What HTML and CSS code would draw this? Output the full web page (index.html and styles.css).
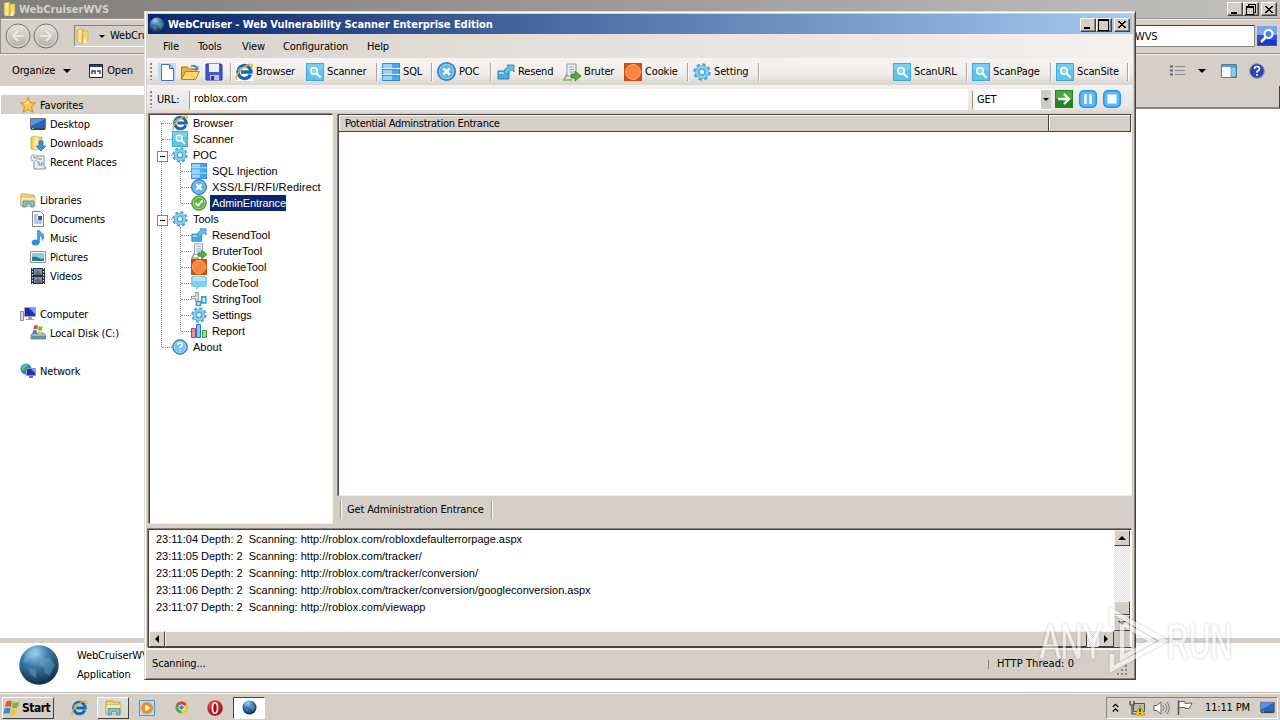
FILE: index.html
```html
<!DOCTYPE html>
<html lang="en">
<head>
  <meta charset="UTF-8" />
  <title>WebCruiser - Web Vulnerability Scanner Enterprise Edition</title>
  <link rel="stylesheet" href="styles.css">
</head>
<body>

<!-- shared icons -->
<svg class="defs" width="0" height="0">
  <defs>
    <linearGradient id="gFolder" x1="0" y1="0" x2="1" y2="0"><stop offset="0" stop-color="#e8c552"/><stop offset=".5" stop-color="#fff0a8"/><stop offset="1" stop-color="#e0b840"/></linearGradient>
    <linearGradient id="gOrb" x1="0" y1="0" x2="0" y2="1"><stop offset="0" stop-color="#e6e4e1"/><stop offset="1" stop-color="#b3afaa"/></linearGradient>
    <radialGradient id="gGlobe" cx=".4" cy=".2" r=".85"><stop offset="0" stop-color="#9fd2ee"/><stop offset=".4" stop-color="#3c7ba8"/><stop offset="1" stop-color="#082742"/></radialGradient>
    <radialGradient id="gRed" cx=".4" cy=".3" r=".7"><stop offset="0" stop-color="#f06060"/><stop offset="1" stop-color="#a80010"/></radialGradient>
  </defs>
  <symbol id="i-folder" viewBox="0 0 16 16"><path d="M2 2l5-1 1 1v13H3l-1-2z" fill="url(#gFolder)" stroke="#c9a23a" stroke-width=".6"/><path d="M8 3h5v10l-5 2z" fill="#f3d76d" stroke="#c9a23a" stroke-width=".6"/><path d="M10 9l2 6H8z" fill="#fff3b8"/></symbol>
  <symbol id="i-globe" viewBox="0 0 16 16"><circle cx="8" cy="8" r="7.500" fill="url(#gGlobe)"/><path d="M3 4q3-3 5-2l-1 2-2 1-1 2-2 0zM9 6l3-1 2 3-2 4-2-1 0-2-2-1zM4 9l3 1 0 3-2-1z" fill="#8fc3e0" opacity=".3"/></symbol>
  <symbol id="i-new" viewBox="0 0 18 18"><path d="M0 0h18v18H0z" fill="#c9d9f4"/><path d="M3.500 1.500h8l4 4v12h-12z" fill="#fbfdff" stroke="#4c6cb0"/><path d="M11.500 1.500v4h4" fill="#9bb8e8" stroke="#4c6cb0"/></symbol>
  <symbol id="i-open" viewBox="0 0 20 18"><path d="M1 16V4h6l2 2h7v3" fill="#e8b23c" stroke="#a87318"/><path d="M1 16.500l4-8h14l-4 8z" fill="#ffd66c" stroke="#b4801c"/><path d="M10 3q4-3 7 1l1-2v5h-5l2-2q-2-2-5-1z" fill="#4b86cc"/></symbol>
  <symbol id="i-save" viewBox="0 0 18 18"><path d="M1 1h15l1 1v15H1z" fill="#4859c8" stroke="#28348c"/><path d="M4 1h10v8H4z" fill="#eef1fb"/><path d="M5 12h9v5H5z" fill="#b8c0e8"/><path d="M6 13h3v4H6z" fill="#2c3890"/></symbol>
  <symbol id="i-ie" viewBox="0 0 18 18"><path d="M15.500 11.500A6.500 6.500 0 1 1 16 9H6" fill="none" stroke="#1668b8" stroke-width="3.400"/><path d="M3 8a6 5 0 0 1 9-3" fill="none" stroke="#6cbcf0" stroke-width="1.400"/><path d="M2 17Q-1 14 6 7T17 1.500q1 1-1 4" fill="none" stroke="#e9b61c" stroke-width="1.600"/></symbol>
  <symbol id="i-scan" viewBox="0 0 18 18"><path d="M0 0h18v18H0z" fill="#3fa9dc"/><path d="M1 1h16v16H1z" fill="#62c2ea"/><path d="M1 1h16v6H1z" fill="#79cdf0"/><circle cx="8" cy="8" r="3.300" fill="#8ad6f5" stroke="#fff" stroke-width="1.500"/><path d="M10.500 10.500l4 4" stroke="#fff" stroke-width="2"/></symbol>
  <symbol id="i-sql" viewBox="0 0 18 18"><path d="M0 0h18v18H0z" fill="#2c8cea"/><path d="M1 1h16v4H1zM1 7h16v4H1zM1 13h16v4H1z" fill="#4aa6f6"/><path d="M1 1h9v4H1zM1 7h9v4H1zM1 13h9v4H1z" fill="#98d4ff"/><path d="M0 5.500h18M0 11.500h18" stroke="#e8f6ff"/></symbol>
  <symbol id="i-poc" viewBox="0 0 18 18"><circle cx="9" cy="9" r="8.500" fill="#3d93d2" stroke="#3478ac"/><circle cx="9" cy="9" r="6.800" fill="#64b5ea" stroke="#8ed0f4"/><path d="M6 6l6 6M12 6l-6 6" stroke="#fff" stroke-width="2.500"/></symbol>
  <symbol id="i-resend" viewBox="0 0 18 18"><path d="M1 8h11v8H1z" fill="#4badde" stroke="#2a83ba"/><path d="M2 9h9v2H2z" fill="#a2dcf5"/><path d="M7 10q0-5 4-6l-1-2h7v7l-2-2q-3 0-4 4z" fill="#65bfea" stroke="#2a83ba" stroke-width=".8"/></symbol>
  <symbol id="i-bruter" viewBox="0 0 18 18"><path d="M4 1h9v12H4z" fill="#eef3f8" stroke="#9098a8"/><path d="M6 4h5M6 6.500h5M6 9h5" stroke="#8fa6cc"/><path d="M4 11l-3 6h8" fill="none" stroke="#7cae66" stroke-width="1.600"/><path d="M8 11h4V8l6 5-6 5v-3H8z" fill="#58ac3c" stroke="#2f7c20" stroke-width=".8"/></symbol>
  <symbol id="i-cookie" viewBox="0 0 18 18"><path d="M0 0h18v18H0z" fill="#c94f15"/><circle cx="9" cy="9" r="7.500" fill="#f9853f" stroke="#ffab76"/></symbol>
  <symbol id="i-gear" viewBox="0 0 18 18"><circle cx="9" cy="9" r="7.600" fill="none" stroke="#4fa8d8" stroke-width="2.200" stroke-dasharray="3.600 2.369"/><circle cx="9" cy="9" r="6.800" fill="#4aa8da"/><circle cx="9" cy="9" r="5" fill="none" stroke="#86d0f2" stroke-width="2.400"/><circle cx="9" cy="9" r="2.700" fill="#fff" stroke="#3b97cc" stroke-width=".8"/></symbol>
  <symbol id="i-check" viewBox="0 0 18 18"><circle cx="9" cy="9" r="8.200" fill="#66b04a" stroke="#3f8430"/><circle cx="9" cy="9" r="6.500" fill="none" stroke="#a8d890"/><path d="M5 9l3 3 5-6" fill="none" stroke="#fff" stroke-width="2"/></symbol>
  <symbol id="i-code" viewBox="0 0 16 16"><path d="M2 1h12q2 0 2 2v7q0 2-2 2H8l-3 3v-3H2q-2 0-2-2V3q0-2 2-2z" fill="#7cd0ee"/><path d="M2 2h12v4H2z" fill="#b8e8f8"/></symbol>
  <symbol id="i-string" viewBox="0 0 16 16"><path d="M6 1v10M0 6.500h6" stroke="#8a949c" stroke-width="3.600"/><path d="M6 2v8M1 6.500h5" stroke="#e6eaee" stroke-width="1.600"/><path d="M5.500 10.500h4v4h-4zM10.800 5.800h4v6h-4z" fill="#d6f0fc" stroke="#3e9fd0" stroke-width="1.700"/></symbol>
  <symbol id="i-report" viewBox="0 0 16 16"><path d="M.5 5.500h4v9h-4z" fill="#f090a8" stroke="#c83858"/><path d="M5.500 1.500h4v13h-4z" fill="#80c8f0" stroke="#2878b0"/><path d="M11.500 7.500h4v7h-4z" fill="#98dc98" stroke="#38983c"/></symbol>
  <symbol id="i-about" viewBox="0 0 18 18"><circle cx="9" cy="9" r="8.300" fill="#439cd6" stroke="#3380b4"/><circle cx="9" cy="9" r="6.500" fill="#77c4ee" stroke="#b0e0f8"/><path d="M6.500 7q0-2.500 2.500-2.500t2.500 2Q11.500 8 9 9.500v1M9 12v1.600" fill="none" stroke="#fff" stroke-width="1.600"/></symbol>
  <symbol id="i-star" viewBox="0 0 16 16"><path d="M8 .5l2.200 5 5.300.6-4 3.600 1.200 5.500L8 12.400l-4.700 2.800 1.200-5.500-4-3.600 5.300-.6z" fill="#fcc84a" stroke="#dc8820"/><path d="M8 3l1 4-5 0z" fill="#fff0a8"/></symbol>
  <symbol id="i-desktop" viewBox="0 0 16 16"><path d="M.5 2.500h15v10H.5z" fill="#2f62bc" stroke="#6a7484"/><path d="M1 3h14L1 10z" fill="#5b94de"/><path d="M1 12h14v2H1z" fill="#39424e"/><path d="M2 12.500h2" stroke="#6d6"/></symbol>
  <symbol id="i-down" viewBox="0 0 16 16"><path d="M1 2l5-1 1 1h5v12l-6 1-5-1z" fill="url(#gFolder)" stroke="#c9a23a" stroke-width=".7"/><path d="M9 6h4v5h3l-5 5-5-5h3z" fill="#3b93dd" stroke="#1d68a8" stroke-width=".7"/></symbol>
  <symbol id="i-recent" viewBox="0 0 16 16"><path d="M5 2h9v11h1.500v2H4V8" fill="#e8edf2" stroke="#8792a0"/><circle cx="4" cy="4" r="3.200" fill="#fff" stroke="#97a0ac"/><path d="M4 2v2h2M8 5h4M7 8h2v3h3V8" fill="none" stroke="#6f8298"/></symbol>
  <symbol id="i-lib" viewBox="0 0 16 16"><path d="M1 2h6l1 1h6v11H1z" fill="#f4dc84" stroke="#cda444"/><path d="M1 5h14v9H1z" fill="#fbea9e" stroke="#cda444" stroke-width=".7"/><path d="M3 15V9h11v6h-3v-3H6v3z" fill="#7cc0e6" stroke="#438cb8" stroke-width=".8"/></symbol>
  <symbol id="i-doc" viewBox="0 0 16 16"><path d="M2.500.5h8l3 3v12h-11z" fill="#fff" stroke="#7a8796"/><path d="M4 4h4M4 6h3M4 12h8M4 10h8M4 8h3" stroke="#6f8fc0"/><path d="M8 5h4v4H8z" fill="#385a88"/></symbol>
  <symbol id="i-music" viewBox="0 0 16 16"><ellipse cx="5.500" cy="12.500" rx="3.800" ry="3" fill="#2e8fdc"/><path d="M7.500 12V.5h2q1 3 4 4 1 3-1 6 0-4-3-5v7z" fill="#49a6e8" stroke="#2074b8" stroke-width=".6"/></symbol>
  <symbol id="i-pic" viewBox="0 0 16 16"><path d="M.5 2.500h15v11H.5z" fill="#fff" stroke="#8a929c"/><path d="M2 4h12v8H2z" fill="#8bc8ee"/><path d="M2 8q4-1 7 1t5 0v3H2z" fill="#2f7c74"/></symbol>
  <symbol id="i-video" viewBox="0 0 16 16"><path d="M1 0h14v16H1z" fill="#27323c"/><path d="M4 1h8v6H4zM4 9h8v6H4z" fill="#5a9cd0"/><path d="M5 5l3-3 2 4 1-1v2H5zM5 13l3-3 3 3v2H5z" fill="#8c5a50"/><path d="M2.500 0v16M13.500 0v16" stroke="#dfe6ec" stroke-dasharray="1.500 1.500"/></symbol>
  <symbol id="i-pc" viewBox="0 0 16 16"><path d="M.5 5.500h3v9h-3z" fill="#d8dade" stroke="#8a8e94"/><path d="M4.500 1.500h11v9h-11z" fill="#1c30b4" stroke="#a4a8b4"/><path d="M9 2h6v6z" fill="#7896f0"/><path d="M8 11h4v2h2v1H6v-1h2z" fill="#a0a4ac"/></symbol>
  <symbol id="i-disk" viewBox="0 0 16 16"><path d="M1 10l2-2h10l2.500 2v4H1z" fill="#a8b4bc" stroke="#66737c" stroke-width=".8"/><path d="M1 11h14v3H1z" fill="#658fa4"/><path d="M4 .500q2-1 4 0l-.7 4q-2-1-4 0z" fill="#e8552c"/><path d="M8.700 1q2 1 4 0l-.7 4q-2 1-4 0z" fill="#77b738"/><path d="M3 5.500q2-1 4 0l-.6 3.500h-4z" fill="#3b83d8"/><path d="M8 6q2 1 4 0l-.7 3h-4z" fill="#f5c02c"/></symbol>
  <symbol id="i-net" viewBox="0 0 16 16"><circle cx="6" cy="6" r="5.500" fill="#2e8bc0"/><path d="M2 3q4-3 6-1l-3 3-3 3zM7 6l3 0-2 4z" fill="#5fc47c"/><path d="M6.500 5.500h9v7h-9z" fill="#1c34bc" stroke="#9098b0"/><path d="M11 6h4v4z" fill="#7b98f0"/><path d="M9 13h4v2H9z" fill="#6c7480"/></symbol>
  <symbol id="i-win" viewBox="0 0 18 18"><path d="M3 3q3-2 6-.5L8 8Q5 6.500 2 8z" fill="#e8592c"/><path d="M10 3q3 1.500 6-.5L15 8q-3 2-6 .5z" fill="#7ab83c"/><path d="M1.500 9.500q3-1.500 6 0L6.500 15q-3-1.500-6 0z" fill="#3b86dc"/><path d="M8.500 10q3 1.500 6-.5L13.500 15q-3 2-6 .5z" fill="#f7c42e"/></symbol>
</svg>

<div class="desktop">

  <!-- Explorer window behind -->
  <div class="explorer">
    <div class="ex-title">
      <svg width="16" height="16"><use href="#i-folder"/></svg>
      <span>WebCruiserWVS</span>
      <div class="win-btns">
        <i class="wbtn min"></i><i class="wbtn restore"></i><i class="wbtn close"></i>
      </div>
    </div>
    <div class="ex-address">
      <svg class="nav-btns" width="56" height="28" viewBox="0 0 56 28">
        <g fill="url(#gOrb)" stroke="#77736e"><circle cx="13" cy="14" r="12"/><circle cx="41" cy="14" r="12"/></g>
        <g fill="none" stroke="#dedbd7"><circle cx="13" cy="14" r="10.500"/><circle cx="41" cy="14" r="10.500"/></g>
        <path d="M19 14H8m5-5l-5 5 5 5M35 14h11m-5-5l5 5-5 5" fill="none" stroke="#efedeb" stroke-width="1.600"/>
      </svg>
      <div class="path"><svg width="16" height="18"><use href="#i-folder"/></svg><b class="arrow-down"></b><span>WebCruiserWVS</span></div>
      <div class="search">WVS</div>
      <svg class="search-btn" width="20" height="20" viewBox="0 0 20 20"><path d="M0 0h20v20H0z" fill="#2d58cc"/><path d="M0 0h20v9H0z" fill="#77a7ec"/><path d="M1 14h18v5H1z" fill="#163ac0"/><circle cx="11.500" cy="8" r="4" fill="#4c83e4" stroke="#fff" stroke-width="2"/><path d="M8.500 11.500L4 16" stroke="#fff" stroke-width="2.500"/></svg>
    </div>
    <div class="ex-tools">
      <span>Organize</span><b class="arrow-down big"></b>
      <svg width="14" height="14" viewBox="0 0 14 14"><path d="M.5.5h13v13H.5z" fill="#fff" stroke="#222"/><path d="M1 1h12v2H1z" fill="#2b3a9c"/><path d="M3 10V7h3v3m2-3h3v3" fill="none" stroke="#345" stroke-width="1.500"/></svg>
      <span class="open">Open</span>
      <div class="ex-views">
        <svg width="15" height="12" viewBox="0 0 15 12"><path d="M0 1.500h3M0 5.500h3M0 9.500h3" stroke="#667" stroke-width="2.200"/><path d="M5 1.500h10M5 5.500h10M5 9.500h10" stroke="#889"/></svg>
        <b class="arrow-down big"></b>
        <svg width="16" height="14" viewBox="0 0 16 14"><path d="M.5.5h15v13H.5z" fill="#fff" stroke="#4480a4"/><path d="M1 1h14v2H1z" fill="#5ca0c8"/><path d="M10 3h5v10h-5z" fill="#8ccae8" stroke="#4480a4" stroke-width=".6"/></svg>
        <svg width="16" height="16" viewBox="0 0 16 16"><circle cx="8" cy="8" r="7.300" fill="#2846b8" stroke="#8c94b0"/><path d="M5.500 6q0-2.500 2.500-2.500T10.500 6Q10.500 7.200 8 8.500v1.300M8 11v1.700" fill="none" stroke="#fff" stroke-width="1.700"/></svg>
      </div>
    </div>
    <div class="ex-body">
      <ul class="places">
        <li class="head sel"><svg><use href="#i-star"/></svg><span>Favorites</span></li>
        <li><svg><use href="#i-desktop"/></svg><span>Desktop</span></li>
        <li><svg><use href="#i-down"/></svg><span>Downloads</span></li>
        <li><svg><use href="#i-recent"/></svg><span>Recent Places</span></li>
        <li class="head gap"><svg><use href="#i-lib"/></svg><span>Libraries</span></li>
        <li><svg><use href="#i-doc"/></svg><span>Documents</span></li>
        <li><svg><use href="#i-music"/></svg><span>Music</span></li>
        <li><svg><use href="#i-pic"/></svg><span>Pictures</span></li>
        <li><svg><use href="#i-video"/></svg><span>Videos</span></li>
        <li class="head gap"><svg><use href="#i-pc"/></svg><span>Computer</span></li>
        <li><svg><use href="#i-disk"/></svg><span>Local Disk (C:)</span></li>
        <li class="head gap"><svg><use href="#i-net"/></svg><span>Network</span></li>
      </ul>
      <div class="files"><div class="files-head"></div></div>
    </div>
    <div class="ex-details">
      <svg width="42" height="42"><use href="#i-globe"/></svg>
      <div><p>WebCruiserWVS</p><p>Application</p></div>
    </div>
  </div>

  <!-- WebCruiser window -->
  <div class="app">
    <div class="app-title">
      <svg width="16" height="16"><use href="#i-globe"/></svg>
      <span>WebCruiser - Web Vulnerability Scanner Enterprise Edition</span>
      <div class="win-btns">
        <i class="wbtn min"></i><i class="wbtn max"></i><i class="wbtn close"></i>
      </div>
    </div>
    <div class="menu"><span>File</span><span>Tools</span><span>View</span><span>Configuration</span><span>Help</span></div>

    <div class="toolbar">
      <i class="grip"></i>
      <svg width="18" height="18"><use href="#i-new"/></svg>
      <svg width="21" height="18"><use href="#i-open"/></svg>
      <svg width="18" height="18"><use href="#i-save"/></svg>
      <i class="sep"></i>
      <a class="tool"><svg class="lit"><use href="#i-ie"/></svg>Browser</a>
      <a class="tool"><svg><use href="#i-scan"/></svg>Scanner</a>
      <i class="sep"></i>
      <a class="tool"><svg><use href="#i-sql"/></svg>SQL</a>
      <i class="sep"></i>
      <a class="tool"><svg class="wide"><use href="#i-poc"/></svg>POC</a>
      <i class="sep"></i>
      <a class="tool"><svg><use href="#i-resend"/></svg>Resend</a>
      <a class="tool"><svg><use href="#i-bruter"/></svg>Bruter</a>
      <a class="tool"><svg><use href="#i-cookie"/></svg>Cookie</a>
      <i class="sep"></i>
      <a class="tool"><svg><use href="#i-gear"/></svg>Setting</a>
      <i class="sep"></i>
      <a class="tool"><svg><use href="#i-scan"/></svg>ScanURL</a>
      <i class="sep"></i>
      <a class="tool"><svg><use href="#i-scan"/></svg>ScanPage</a>
      <i class="sep"></i>
      <a class="tool"><svg><use href="#i-scan"/></svg>ScanSite</a>
      <i class="sep"></i>
    </div>

    <div class="urlbar">
      <i class="grip"></i>
      <span class="label">URL:</span>
      <i class="sep"></i>
      <div class="url">roblox.com</div>
      <i class="sep"></i>
      <div class="method"><span>GET</span><i class="drop"><b class="arrow-down"></b></i></div>
      <svg width="18" height="18" viewBox="0 0 18 18"><path d="M0 0h18v18H0z" fill="#248424"/><path d="M1 1h16v8H1z" fill="#48a83c"/><path d="M3 9h10M9 4l5 5-5 5" fill="none" stroke="#fff" stroke-width="2.400"/></svg>
      <svg width="18" height="18" viewBox="0 0 18 18"><rect width="18" height="18" rx="5" fill="#2b94ee"/><rect x="1.500" y="1.500" width="15" height="15" rx="4" fill="#5cb8fc"/><path d="M6.500 4v10M11.500 4v10" stroke="#fff" stroke-width="2.500"/></svg>
      <svg width="18" height="18" viewBox="0 0 18 18"><rect width="18" height="18" rx="5" fill="#2b94ee"/><rect x="1.500" y="1.500" width="15" height="15" rx="4" fill="#5cb8fc"/><path d="M4.500 4.500h9v9h-9z" fill="#fff"/></svg>
    </div>

    <div class="work">
      <div class="tree-box">
        <ul class="tree">
          <li><svg><use href="#i-ie"/></svg><span>Browser</span></li>
          <li><svg><use href="#i-scan"/></svg><span>Scanner</span></li>
          <li class="node"><svg><use href="#i-gear"/></svg><span>POC</span></li>
          <ul>
            <li><svg><use href="#i-sql"/></svg><span>SQL Injection</span></li>
            <li><svg><use href="#i-poc"/></svg><span class="long">XSS/LFI/RFI/Redirect</span></li>
            <li class="active"><svg><use href="#i-check"/></svg><span>AdminEntrance</span></li>
          </ul>
          <li class="node"><svg><use href="#i-gear"/></svg><span>Tools</span></li>
          <ul>
            <li><svg><use href="#i-resend"/></svg><span>ResendTool</span></li>
            <li><svg><use href="#i-bruter"/></svg><span>BruterTool</span></li>
            <li><svg><use href="#i-cookie"/></svg><span>CookieTool</span></li>
            <li><svg><use href="#i-code"/></svg><span>CodeTool</span></li>
            <li><svg><use href="#i-string"/></svg><span>StringTool</span></li>
            <li><svg><use href="#i-gear"/></svg><span>Settings</span></li>
            <li><svg><use href="#i-report"/></svg><span>Report</span></li>
          </ul>
          <li><svg><use href="#i-about"/></svg><span>About</span></li>
        </ul>
      </div>
      <div class="result">
        <div class="list">
          <div class="list-head"><span>Potential Adminstration Entrance</span><span></span></div>
        </div>
        <div class="actions"><i class="sep"></i><span>Get Administration Entrance</span><i class="sep"></i></div>
      </div>
    </div>

    <div class="log">
      <div class="lines">
        <p>23:11:04 Depth: 2&nbsp; Scanning: http://roblox.com/robloxdefaulterrorpage.aspx</p>
        <p>23:11:05 Depth: 2&nbsp; Scanning: http://roblox.com/tracker/</p>
        <p>23:11:05 Depth: 2&nbsp; Scanning: http://roblox.com/tracker/conversion/</p>
        <p>23:11:06 Depth: 2&nbsp; Scanning: http://roblox.com/tracker/conversion/googleconversion.aspx</p>
        <p>23:11:07 Depth: 2&nbsp; Scanning: http://roblox.com/viewapp</p>
      </div>
      <div class="vscroll"><i class="sbtn up"></i><i class="track"></i><i class="thumb"></i><i class="sbtn down"></i></div>
      <div class="hscroll"><i class="sbtn left"></i><i class="thumb"></i><i class="track"></i><i class="sbtn right"></i></div>
      <div class="corner"></div>
    </div>

    <div class="status"><span>Scanning...</span><span class="thread">HTTP Thread: 0</span>
      <svg width="12" height="12" viewBox="0 0 12 12"><path d="M9 1h2v2H9zM5 5h2v2H5zM9 5h2v2H9zM1 9h2v2H1zM5 9h2v2H5zM9 9h2v2H9z" fill="#8a8680"/></svg>
    </div>
  </div>

  <!-- Taskbar -->
  <div class="taskbar">
    <div class="start"><svg width="18" height="18"><use href="#i-win"/></svg>Start</div>
    <div class="task"><svg width="16" height="16"><use href="#i-ie"/></svg></div>
    <div class="task raised"><svg width="17" height="17"><use href="#i-lib"/></svg></div>
    <div class="task"><svg width="16" height="16" viewBox="0 0 16 16"><path d="M.5.5h15v15H.5z" fill="#b8dcf6" stroke="#4c94cc"/><circle cx="8" cy="8" r="6" fill="#f48c1c"/><path d="M6 4.500l5.500 3.500L6 11.500z" fill="#fff"/></svg></div>
    <div class="task"><svg width="13" height="13" viewBox="0 0 16 16"><circle cx="8" cy="8" r="7.500" fill="#48a84c"/><path d="M8 8L1.500 4.200A7.500 7.500 0 0 1 14.500 4.300z" fill="#e04434"/><path d="M8 8l6.500-3.700A7.500 7.500 0 0 1 8 15.500z" fill="#f8cc34"/><circle cx="8" cy="8" r="3.700" fill="#fff"/><circle cx="8" cy="8" r="2.800" fill="#4484e8"/></svg></div>
    <div class="task"><svg width="16" height="16" viewBox="0 0 16 16"><circle cx="8" cy="8" r="7.700" fill="url(#gRed)"/><ellipse cx="8" cy="8" rx="2.500" ry="5.300" fill="#b80818" stroke="#fff" stroke-width="1.600"/></svg></div>
    <div class="task pressed"><svg width="15" height="15"><use href="#i-globe"/></svg></div>
    <div class="tray">
      <svg width="7" height="10" viewBox="0 0 7 10"><path d="M.8 4l2.700-2.700L6.200 4M.8 8.500l2.700-2.700 2.700 2.700" fill="none" stroke="#000" stroke-width="1.300"/></svg>
      <svg width="17" height="16" viewBox="0 0 17 16"><path d="M4.500 3.500h11v8h-11z" fill="#b8b8b4" stroke="#555"/><path d="M1 1v4h4V1M3 5v9h4" fill="none" stroke="#444" stroke-width="1.200"/><path d="M11 5.500l5 9.500H6z" fill="#fccf1c" stroke="#a88400" stroke-width=".7"/><path d="M11 8.500v3.500M11 13v1.200" stroke="#000" stroke-width="1.300"/></svg>
      <svg width="17" height="14" viewBox="0 0 17 14"><path d="M1 4.500h2.500L8 1v12L3.500 9.500H1z" fill="#fff" stroke="#666"/><path d="M10 4q2 3 0 6M12 2.500q3.500 4.500 0 9M14 1q4.500 6 0 12" fill="none" stroke="#777"/></svg>
      <svg width="17" height="15" viewBox="0 0 17 15"><path d="M1.500 15V.5" stroke="#555" stroke-width="1.500"/><path d="M2 1.500h6v2l7-.5-1.500 3L12 8.500H8v-1H2z" fill="#fff" stroke="#666"/></svg>
      <span class="clock">11:11 PM</span>
      <svg width="15" height="15"><use href="#i-desktop"/></svg>
    </div>
  </div>

  <svg class="watermark" width="208" height="68" viewBox="0 0 208 68">
    <g fill="#fff" stroke="#fff" stroke-width=".8">
      <text x="4" y="51" textLength="63" lengthAdjust="spacingAndGlyphs">ANY</text>
      <text x="131" y="51" textLength="65" lengthAdjust="spacingAndGlyphs">RUN</text>
    </g>
    <path d="M76 19V4l52 30-52 28V47M86 16v35l30-17z" fill="none" stroke="#fff" stroke-width="4.500"/>
  </svg>
</div>

</body>
</html>
```
FILE: styles.css
```css
:root {
  --face: #d5cfc8;
  --shadow: #87837d;
  --dark: #45423f;
}

* {
  box-sizing: border-box;
  margin: 0;
  padding: 0;
}

body {
  overflow: hidden;
  font: 11px/14px 'DejaVu Sans Condensed', 'DejaVu Sans', sans-serif;
  font-stretch: condensed;
  letter-spacing: -0.15px;
  color: #000;
}

ul {
  list-style: none;
}

svg {
  flex: none;
}

.defs {
  position: absolute;
}

.desktop {
  position: relative;
  width: 1280px;
  height: 720px;
  overflow: hidden;
  background: #fff;
  white-space: nowrap;
}

/* small shared parts */
.arrow-down {
  border: 3px solid transparent;
  border-top-color: #000;
  border-bottom: 0;
}

.arrow-down.big {
  border-width: 4px 4px 0;
}

.sep {
  width: 2px;
  height: 18px;
  border-left: 1px solid #9c9890;
  border-right: 1px solid #fff;
}

.grip {
  width: 2px;
  height: 17px;
  background: repeating-linear-gradient(#8b8781 0 2px, transparent 2px 4px);
}

.win-btns {
  display: flex;
  margin-left: auto;
}

.wbtn {
  display: flex;
  align-items: center;
  justify-content: center;
  width: 16px;
  height: 14px;
  background: var(--face);
  border: 1px solid;
  border-color: #fff var(--dark) var(--dark) #fff;
  box-shadow: inset -1px -1px var(--shadow);
}

.wbtn.close {
  margin-left: 2px;
}

.min::after {
  content: "";
  width: 6px;
  height: 2px;
  margin: 7px 2px 0 0;
  background: #000;
}

.max::after {
  content: "";
  width: 9px;
  height: 9px;
  margin-right: 1px;
  border: 1px solid #000;
  border-top-width: 2px;
}

.restore::after {
  content: "";
  width: 6px;
  height: 6px;
  margin: 2px 3px 0 0;
  background: var(--face);
  border: 1px solid #000;
  border-top-width: 2px;
  box-shadow: 2px -2px 0 -1px var(--face), 2px -2px #000;
}

.close::after {
  content: "";
  width: 8px;
  height: 7px;
  margin-right: 1px;
  background:
    linear-gradient(to top right, transparent 42%, #000 44% 56%, transparent 58%),
    linear-gradient(to bottom right, transparent 42%, #000 44% 56%, transparent 58%);
}

/* explorer */
.explorer {
  display: flex;
  flex-direction: column;
  height: 692px;
  background: var(--face);
}

.ex-title {
  display: flex;
  align-items: center;
  height: 18px;
  padding: 0 3px 0 2px;
  background: linear-gradient(to right, #7f7f7d, #96918e 35%, #a39da0 55%, #b9b8b6 85%, #c0c0be);
  color: #d5cfc8;
  font-weight: bold;
}

.ex-title span {
  margin: 1px 0 0 1px;
  letter-spacing: 0;
}

.ex-address {
  display: flex;
  align-items: center;
  height: 36px;
  padding: 0 2px 0 4px;
  border-top: 1px solid #96928c;
  border-bottom: 1px solid #96928c;
  border-left: 1px solid #96928c;
  box-shadow: inset 0 1px #efece8;
}

.path {
  display: flex;
  align-items: center;
  width: 1054px;
  height: 22px;
  margin-left: 13px;
  border: 1px solid;
  border-color: var(--shadow) #fff #fff var(--shadow);
}

.path .arrow-down {
  margin: 0 5px 0 8px;
}

.path span {
  width: 34px;
  overflow: hidden;
}

.search {
  width: 125px;
  height: 22px;
  margin-left: 2px;
  padding: 4px 0 0 4px;
  background: #fff;
  border: 1px solid var(--shadow);
  border-top-color: var(--dark);
}

.search-btn {
  margin-left: 2px;
}

.ex-tools {
  display: flex;
  align-items: center;
  height: 32px;
  padding: 0 15px 0 12px;
  border-top: 1px solid #f4f2ee;
}

.ex-tools > .arrow-down {
  margin: 0 18px 0 8px;
}

.ex-tools .open {
  margin-left: 4px;
}

.ex-views {
  display: flex;
  align-items: center;
  margin-left: auto;
}

.ex-views .arrow-down {
  margin: 0 15px 0 13px;
}

.ex-views svg:last-child {
  margin-left: 12px;
}

.ex-body {
  flex: 1;
  display: flex;
  background: #fff;
}

.places {
  width: 144px;
  padding-top: 9px;
}

.places li {
  display: flex;
  align-items: center;
  gap: 4px;
  height: 19px;
  padding-left: 30px;
}

.places span {
  margin-top: 2px;
}

.places svg {
  width: 16px;
  height: 16px;
}

.places .head {
  padding-left: 20px;
}

.places .sel {
  margin-left: 1px;
  padding-left: 19px;
  background: var(--face);
}

.places .gap {
  margin-top: 19px;
}

.files {
  flex: 1;
}

.files-head {
  height: 23px;
  background: var(--face);
  border-bottom: 2px solid var(--shadow);
  border-right: 1px solid var(--dark);
}

.ex-details {
  display: flex;
  height: 54px;
  padding: 1px 0 0 18px;
  border-top: 5px solid var(--face);
  background: #fff;
}

.ex-details div {
  width: 67px;
  margin: 5px 0 0 17px;
  overflow: hidden;
}

.ex-details p {
  height: 19px;
}

/* main window */
.app {
  position: absolute;
  left: 144px;
  top: 11px;
  display: flex;
  flex-direction: column;
  width: 992px;
  height: 669px;
  padding: 2px 2px 0 2px;
  background: var(--face);
  border: 1px solid;
  border-color: #dfdbd5 var(--dark) var(--dark) #dfdbd5;
  box-shadow: inset 1px 1px #fff, inset -1px -1px var(--shadow);
}

.app > * {
  flex: none;
}

.app-title {
  display: flex;
  align-items: center;
  height: 20px;
  margin: 0 1px;
  padding: 1px 2px 0 1px;
  background: linear-gradient(to right, #0b266c, #a6caf0);
  color: #fff;
  font-weight: bold;
}

.app-title span {
  margin-left: 3px;
  letter-spacing: -0.05px;
}

.menu {
  display: grid;
  grid-template-columns: 35px 44px 41px 84px 40px;
  align-items: center;
  height: 24px;
  padding: 2px 0 0 16px;
  background: linear-gradient(to right, #d8d3cb, #f3f0ee);
}

.toolbar {
  display: grid;
  grid-template-columns: 8px 22px 25px 25px 5px 71px 70px 6px 49px 6px 53px 7px 66px 61px 63px 6px 65px 135px 73px 6px 78px 6px 71px 2px;
  align-items: center;
  height: 27px;
  padding-left: 3px;
  background: linear-gradient(#f6f4f2, #efecea 60%, #d8d4ce);
}

.toolbar > .sep {
  border-left-color: #a8a49c;
}

.tool {
  display: flex;
  align-items: center;
  gap: 3px;
}

.tool svg {
  width: 18px;
  height: 18px;
}

.tool .wide {
  width: 19px;
  height: 19px;
}

.tool .lit {
  background: #fff;
}

.urlbar {
  display: flex;
  align-items: center;
  height: 29px;
  padding-left: 3px;
  background: linear-gradient(#f3f1ee, #e8e5e1 80%, #d5cfc8);
}

.urlbar .label {
  width: 37px;
  padding-left: 5px;
}

.url {
  width: 777px;
  height: 21px;
  margin-right: 4px;
  padding: 3px;
  background: #fff;
}

.method {
  display: flex;
  align-items: center;
  width: 76px;
  height: 21px;
  margin: 0 4px 0 1px;
  padding-left: 2px;
  background: #fff;
}

.drop {
  display: flex;
  align-items: center;
  justify-content: center;
  width: 10px;
  height: 19px;
  margin-left: auto;
  background: #cfcac4;
}

.urlbar > svg {
  margin-right: 6px;
  margin-top: -2px;
}

.work {
  display: flex;
  gap: 5px;
  height: 410px;
}

.tree-box {
  width: 184px;
  margin-left: 2px;
  background: #fff;
  border: 1px solid;
  border-color: var(--dark) #f3f0e8 #f3f0e8 var(--dark);
  box-shadow: -1px -1px var(--shadow);
  font-family: 'Liberation Sans', sans-serif;
  letter-spacing: 0;
}

.tree {
  position: relative;
}

.tree li {
  position: relative;
  display: flex;
  align-items: center;
  height: 16px;
  padding-left: 22px;
}

.tree ul {
  position: relative;
}

.tree ul li {
  padding-left: 41px;
}

.tree svg {
  width: 16px;
  height: 16px;
}

.tree span {
  margin-left: 3px;
  padding: 1px 2px;
}

.tree .long {
  letter-spacing: 0.15px;
}

/* dotted connectors */
.tree::before,
.tree ul::before {
  content: "";
  position: absolute;
  left: 11px;
  top: 8px;
  bottom: 8px;
  border-left: 1px dotted #8c8c8c;
}

.tree ul::before {
  left: 30px;
  top: 0;
}

.tree li::before {
  content: "";
  position: absolute;
  left: 12px;
  top: 8px;
  width: 10px;
  border-top: 1px dotted #8c8c8c;
}

.tree ul li::before {
  left: 31px;
}

.tree .node::after {
  content: "";
  position: absolute;
  left: 7px;
  top: 4px;
  width: 9px;
  height: 9px;
  border: 1px solid #848484;
  background: linear-gradient(#000, #000) center / 5px 1px no-repeat #fff;
}

.tree .active span {
  padding: 1px 0 1px 2px;
  background: #0b266c;
  color: #fff;
  letter-spacing: -0.1px;
}

.result {
  display: flex;
  flex-direction: column;
  width: 794px;
}

.list {
  height: 384px;
  background: #fff;
  border: 1px solid;
  border-color: var(--dark) #f3f0e8 #f3f0e8 var(--dark);
  box-shadow: -1px 0 var(--shadow);
}

.list-head {
  display: grid;
  grid-template-columns: 710px 1fr;
  height: 17px;
}

.list-head span {
  padding: 2px 0 0 6px;
  background: var(--face);
  border-right: 1px solid var(--dark);
  border-bottom: 1px solid var(--dark);
  box-shadow: inset 1px 1px #fff;
  letter-spacing: -0.28px;
}

.actions {
  display: flex;
  align-items: center;
  height: 28px;
  padding-left: 2px;
}

.actions span {
  width: 144px;
  margin-right: 5px;
  padding-left: 5px;
}

.log {
  display: grid;
  grid-template-columns: 1fr 16px;
  grid-template-rows: 1fr 16px;
  height: 119px;
  margin: 5px 1px 0;
  padding-right: 1px;
  background: #fff;
  border: 1px solid;
  border-color: var(--dark) #fff var(--dark) var(--dark);
  box-shadow: -1px -1px var(--shadow);
}

.lines {
  padding: 1px 7px;
  line-height: 17px;
  font-family: 'Liberation Sans', sans-serif;
  letter-spacing: 0;
}

.vscroll,
.hscroll {
  display: flex;
}

.vscroll {
  flex-direction: column;
}

.hscroll {
  grid-row: 2;
}

.sbtn,
.thumb {
  display: flex;
  align-items: center;
  justify-content: center;
  width: 16px;
  height: 16px;
  background: var(--face);
  border: 1px solid;
  border-color: #f6f4f0 var(--dark) var(--dark) #f6f4f0;
}

.track {
  flex: 1;
  background: repeating-conic-gradient(#dfdbd4 0 25%, #fff 0 50%) 0 0 / 2px 2px;
}

.vscroll .thumb {
  height: 14px;
}

.hscroll .thumb {
  width: 922px;
}

.sbtn::after {
  content: "";
  border: 4px solid transparent;
}

.up::after {
  border-bottom-color: #000;
  border-top: 0;
}

.down::after {
  border-top-color: #000;
  border-bottom: 0;
}

.left::after {
  border-right-color: #000;
  border-left: 0;
}

.right::after {
  border-left-color: #000;
  border-right: 0;
}

.corner {
  grid-column: 2;
  grid-row: 2;
  background: #cbc7c1;
}

.status {
  display: flex;
  align-items: center;
  height: 29px;
  padding: 0 5px;
  border-top: 2px solid #f4f2ee;
}

.thread {
  width: 129px;
  margin-left: auto;
  padding-left: 10px;
  background: linear-gradient(var(--shadow), var(--shadow)) 1px 3px / 1px 9px no-repeat;
  letter-spacing: 0.1px;
}

.status svg {
  margin-top: 12px;
}

/* taskbar */
.taskbar {
  display: flex;
  align-items: center;
  height: 28px;
  padding: 3px 2px 1px;
  background: var(--face);
  border-top: 1px solid #c4bfb8;
  box-shadow: inset 0 1px #fff;
}

.start {
  display: flex;
  align-items: center;
  gap: 1px;
  width: 52px;
  height: 22px;
  margin-right: 9px;
  border: 1px solid;
  border-color: #fff var(--dark) var(--dark) #fff;
  font-size: 12px;
  font-weight: bold;
  letter-spacing: -0.5px;
}

.task {
  display: flex;
  align-items: center;
  justify-content: center;
  width: 32px;
  height: 22px;
  margin-right: 2px;
}

.raised {
  border: 1px solid;
  border-color: #fff var(--dark) var(--dark) #fff;
  background: #dedad4;
}

.pressed {
  border: 1px solid;
  border-color: var(--dark) #fff #fff var(--dark);
  background: #fff;
}

.tray {
  display: flex;
  align-items: center;
  width: 172px;
  height: 22px;
  margin-left: auto;
  padding-left: 5px;
  border: 1px solid;
  border-color: var(--shadow) #fff #fff var(--shadow);
}

.tray svg + svg {
  margin-left: 7px;
}

.tray svg:nth-child(2) {
  margin-left: 10px;
}

.clock {
  width: 55px;
  margin-left: 11px;
}

.watermark {
  position: absolute;
  left: 1036px;
  top: 607px;
  overflow: visible;
  opacity: 0.6;
  filter: drop-shadow(0 0 1.5px rgba(90, 90, 90, 0.55));
  font: 49px 'Liberation Sans', sans-serif;
}
```
